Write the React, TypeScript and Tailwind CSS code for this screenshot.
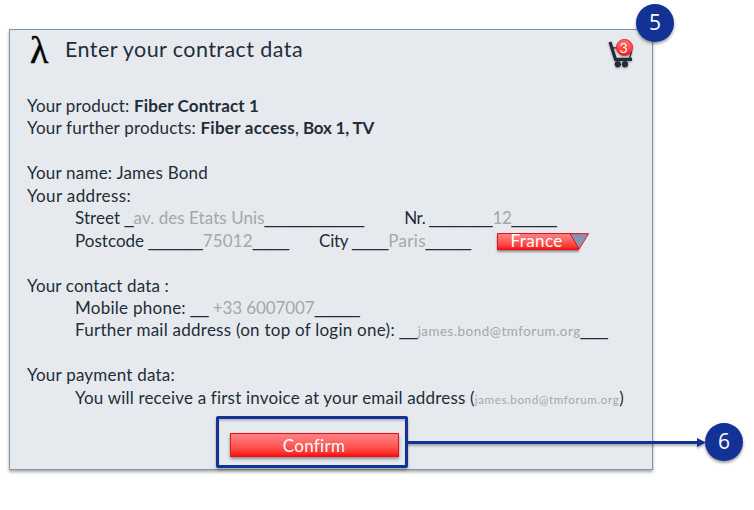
import { useLayoutEffect, useRef, useState, type ReactNode } from "react";

/** Text run whose tracking is adjusted so that it fills the given width. */
function Run({ w, className = "", children }: { w: number; className?: string; children: string }) {
  const ref = useRef<HTMLSpanElement>(null);
  const [spacing, setSpacing] = useState(0);
  useLayoutEffect(() => {
    if (ref.current) {
      const natural = ref.current.getBoundingClientRect().width;
      setSpacing((w - natural) / children.length);
    }
  }, [w, children]);
  return (
    <span ref={ref} className={`whitespace-pre ${className}`} style={{ letterSpacing: spacing }}>
      {children}
    </span>
  );
}

function Line({ indent = false, children }: { indent?: boolean; children?: ReactNode }) {
  return (
    <div className={`flex h-[22.45px] items-baseline leading-[22.45px] ${indent ? "pl-[48px]" : ""}`}>{children}</div>
  );
}

function Blank({ n }: { n: number }) {
  return (
    <span className="font-['Liberation_Sans',sans-serif] text-[16.3px] whitespace-pre">{"_".repeat(n)}</span>
  );
}

function Step({ className, children }: { className: string; children: ReactNode }) {
  return (
    <div
      className={`absolute flex size-[38px] items-center justify-center rounded-full bg-[#123296] font-['Open_Sans',sans-serif] text-[21px] text-white shadow-[0_2px_3px_rgba(0,0,0,0.4)] ${className}`}
    >
      {children}
    </div>
  );
}

function Cart() {
  return (
    <div className="relative h-[30px] w-[26px] drop-shadow-[0_1px_1px_rgba(0,0,0,0.35)]">
      <svg width="26" height="30" viewBox="0 0 26 30" fill="none">
        <path d="M.5 3.5 L3.5 2.5 L8.6 18.8 H24 V22 H6.4 Z" fill="#222d38" />
        <path d="M5 8.8 H22 M23.6 12 L21.4 20" stroke="#222d38" strokeWidth="1.3" />
        <circle cx="9.8" cy="25.2" r="3.1" fill="#222d38" />
        <circle cx="17" cy="25.2" r="3.1" fill="#222d38" />
      </svg>
      <span className="absolute top-0 left-[8px] flex size-[17px] items-center justify-center rounded-full border border-[#ee1c25] bg-linear-to-b from-[#ff7373] to-[#ff1010] pr-[2px] font-['Lato',sans-serif] text-[14px] leading-none text-white">
        3
      </span>
    </div>
  );
}

export default function App() {
  return (
    <div className="relative h-[510px] w-[754px] overflow-hidden bg-white pt-[29px] pl-[9px] font-['Lato',sans-serif] text-[#222d38]">
      <main className="h-[441px] w-[644px] border border-[#8497aa] bg-[#e6eaef] shadow-[0_2px_3px_rgba(0,0,0,0.35)]">
        <header className="flex h-[65px] items-start">
          <span className="ml-[20px] w-[35px] font-['Liberation_Serif',serif] text-[38px] leading-[40px] text-black [-webkit-text-stroke:0.5px_black]">λ</span>
          <h1 className="mt-[4px] flex-1 text-[21.5px] leading-[30px]">
            <Run w={238}>Enter your contract data</Run>
          </h1>
          <div className="mt-[9px] mr-[18px]">
            <Cart />
          </div>
        </header>

        <section className="pl-[17px] text-[17px]">
          <Line>
            <Run w={107}>{"Your product: "}</Run>
            <Run w={125} className="font-bold">Fiber Contract 1</Run>
          </Line>
          <Line>
            <Run w={173.5}>{"Your further products: "}</Run>
            <Run w={94.5} className="font-bold">Fiber access</Run>
            <Run w={8}>{", "}</Run>
            <Run w={71} className="font-bold">Box 1, TV</Run>
          </Line>
          <Line />
          <Line>
            <Run w={181}>Your name: James Bond</Run>
          </Line>
          <Line>
            <Run w={104}>Your address:</Run>
          </Line>
          <Line indent>
            <Run w={49.5}>{"Street "}</Run>
            <Blank n={1} />
            <Run w={131} className="text-[#a6a6a6]">av. des Etats Unis</Run>
            <Blank n={11} />
            <span className="w-[40px]" />
            <Run w={25}>{"Nr. "}</Run>
            <Blank n={7} />
            <Run w={19} className="text-[#a6a6a6]">12</Run>
            <Blank n={5} />
          </Line>
          <Line indent>
            <Run w={73.5}>{"Postcode "}</Run>
            <Blank n={6} />
            <Run w={50} className="text-[#a6a6a6]">75012</Run>
            <Blank n={4} />
            <span className="w-[30px]" />
            <Run w={33}>{"City "}</Run>
            <Blank n={4} />
            <Run w={37.5} className="text-[#a6a6a6]">Paris</Run>
            <Blank n={5} />
            <div className="relative ml-[25.5px] h-[18px] w-[92px] self-start">
              <div className="mt-[3px] flex h-[17px] w-[82px] items-center justify-center border border-[#e3131d] bg-linear-to-b from-[#ff7b7b] from-10% via-[#ff6060] via-45% to-[#ff0b0b] pr-[2px] text-white shadow-[0_2px_2px_rgba(0,0,0,0.4)]">
                <Run w={52}>France</Run>
              </div>
              <svg className="absolute top-[3px] left-[72px]" width="21" height="17" viewBox="0 0 21 17">
                <path d="M1 .7 H19.5 L10.2 16 Z" fill="#8497b0" stroke="#e3131d" />
              </svg>
            </div>
          </Line>
          <Line />
          <Line>
            <Run w={142}>Your contact data :</Run>
          </Line>
          <Line indent>
            <Run w={115.5}>{"Mobile phone: "}</Run>
            <Blank n={2} />
            <Run w={106} className="text-[#a6a6a6]">{" +33 6007007"}</Run>
            <Blank n={5} />
          </Line>
          <Line indent>
            <Run w={324.5}>{"Further mail address (on top of login one): "}</Run>
            <Blank n={2} />
            <Run w={163} className="text-[13.4px] text-[#a6a6a6]">james.bond@tmforum.org</Run>
            <Blank n={3} />
          </Line>
          <Line />
          <Line>
            <Run w={148}>Your payment data:</Run>
          </Line>
          <Line indent>
            <Run w={399.5}>You will receive a first invoice at your email address (</Run>
            <Run w={144.5} className="text-[11.6px] text-[#a6a6a6]">james.bond@tmforum.org</Run>
            <span>)</span>
          </Line>
        </section>

        <div className="mt-[7px] ml-[206px] flex h-[52px] w-[192px] items-center justify-center rounded-[2px] border-3 border-[#123296] pt-[6px] pl-[4px] shadow-[0_2px_3px_rgba(0,0,0,0.3),inset_0_2px_2px_rgba(0,0,0,0.2)]">
          <button className="h-[24px] w-[169px] border border-[#e3131d] bg-linear-to-b from-[#ff7b7b] from-10% via-[#ff6060] via-45% to-[#ff0505] text-[17px] leading-[21px] text-white shadow-[0_2px_3px_rgba(0,0,0,0.4)]">
            <Run w={62}>Confirm</Run>
          </button>
        </div>
      </main>

      <svg className="absolute top-[434px] left-[407px] drop-shadow-[0_2px_1px_rgba(0,0,0,0.3)]" width="299" height="18" viewBox="0 0 299 18">
        <path d="M0 8.5 H292" stroke="#123296" strokeWidth="3" />
        <path d="M290 4 L299 8.5 L290 13 Z" fill="#123296" />
      </svg>
      <Step className="top-[4px] left-[636px]">5</Step>
      <Step className="top-[423px] left-[705px]">6</Step>
    </div>
  );
}
